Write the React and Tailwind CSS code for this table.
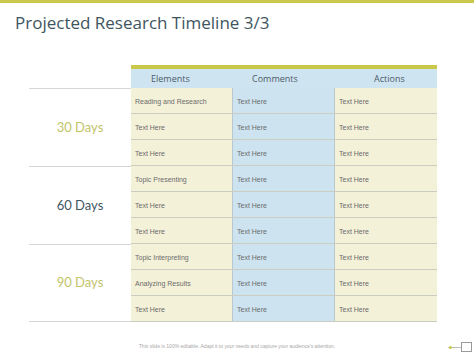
import React from 'react';

const groups = [
  {
    label: '30 Days',
    color: 'text-[#c2c46a]',
    rows: ['Reading and Research', 'Text Here', 'Text Here'],
  },
  {
    label: '60 Days',
    color: 'text-[#3f5663]',
    rows: ['Topic Presenting', 'Text Here', 'Text Here'],
  },
  {
    label: '90 Days',
    color: 'text-[#c2c46a]',
    rows: ['Topic Interpreting', 'Analyzing Results', 'Text Here'],
  },
];

const Row = ({ first }) => (
  <div className="flex h-[26px] border-b border-[#cbcdc2] text-[7px] text-[#6b6b6b] font-['Liberation_Sans',sans-serif]">
    <div className="w-[102px] bg-[#f4f1d9] flex items-center pl-1 pt-[3px] border-r border-[#b9c7cf]">{first}</div>
    <div className="w-[102px] bg-[#cde3f0] flex items-center pl-1 pt-[3px] border-r border-[#b9c7cf]">Text Here</div>
    <div className="w-[102px] bg-[#f4f1d9] flex items-center pl-1 pt-[3px]">Text Here</div>
  </div>
);

const App = () => {
  return (
    <div className="relative w-[474px] h-[355px] bg-white overflow-hidden">
      <div className="h-[3px] bg-[#c9c84a]" />
      <h1 className="pl-[15px] pt-[8px] text-[17px] leading-[23px] text-[#3e5561] font-['Open_Sans',sans-serif]">
        Projected Research Timeline 3/3
      </h1>

      <div className="flex mt-[31px] pl-[29px]">
        <div className="w-[102px]">
          <div className="h-[23px]" />
          {groups.map((g, i) => (
            <div
              key={g.label}
              className={`h-[78px] border-t border-[#d6d6d6] flex items-center justify-center text-[13px] font-['Lato',sans-serif] ${g.color} ${i === 2 ? 'border-b' : ''}`}
            >
              {g.label}
            </div>
          ))}
        </div>

        <div className="w-[306px]">
          <div className="h-[4px] bg-[#c9c84a]" />
          <div className="flex h-[19px] bg-[#cfe4f1] text-[9px] text-[#4b5b68] font-['Open_Sans',sans-serif] items-center">
            <div className="w-[102px] pl-[20px]">Elements</div>
            <div className="w-[102px] pl-[19px]">Comments</div>
            <div className="w-[102px] pl-[39px]">Actions</div>
          </div>
          {groups.map((g) =>
            g.rows.map((r, j) => <Row key={g.label + j} first={r} />)
          )}
        </div>
      </div>

      <p className="mt-[21px] text-center text-[5px] text-[#a8a8a8] font-['Liberation_Sans',sans-serif]">
        This slide is 100% editable. Adapt it to your needs and capture your audience's attention.
      </p>

      <div className="absolute left-[448px] top-[342px] flex items-center">
        <div className="relative w-[13px] h-px bg-[#bfbfbf]">
          <div className="absolute left-[1px] -top-[1px] w-[3px] h-[3px] rounded-full bg-[#c9c84a]" />
        </div>
        <div className="w-[11px] h-[10px] border border-[#9a9a9a] bg-white" />
      </div>
    </div>
  );
};

export default App;
